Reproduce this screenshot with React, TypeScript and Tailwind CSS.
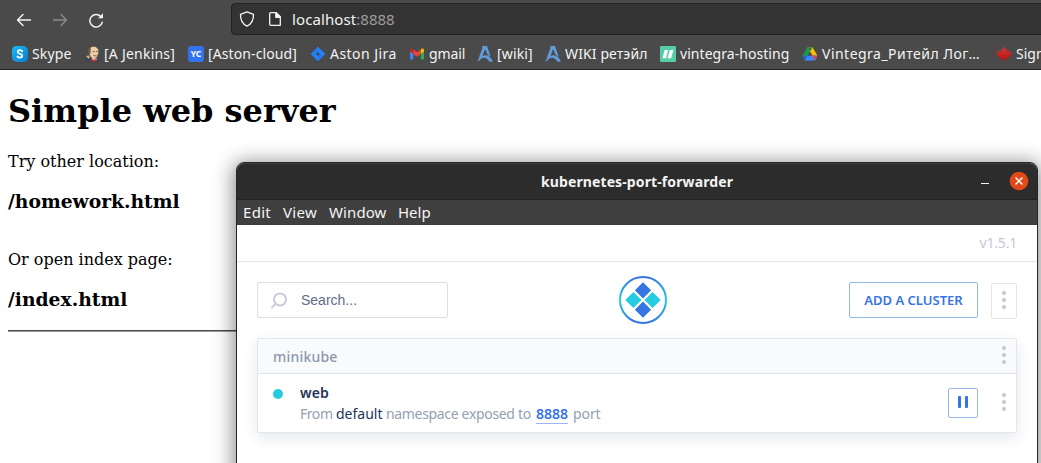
import type { ReactNode } from "react";

function SkypeIcon() {
  return (
    <svg width="16" height="16" viewBox="0 0 16 16">
      <defs>
        <linearGradient id="skype" x1="0" y1="0" x2="1" y2="1">
          <stop offset="0" stopColor="#19baf5" />
          <stop offset="1" stopColor="#0a7bd0" />
        </linearGradient>
      </defs>
      <path d="M4.300 0H11a5 5 0 0 1 5 5v6.700a4.300 4.300 0 0 1-4.300 4.300H5a5 5 0 0 1-5-5V4.300A4.300 4.300 0 0 1 4.300 0Z" fill="url(#skype)" />
      <path d="M10.300 5.300C9.800 4.500 9 4.200 8 4.200c-1.400 0-2.300.7-2.300 1.800C5.700 8.500 10.300 7.300 10.300 9.800c0 1.200-1 1.900-2.400 1.900-1.100 0-2-.4-2.500-1.200" fill="none" stroke="#fff" strokeWidth="1.700" strokeLinecap="round" />
    </svg>
  );
}

function JenkinsIcon() {
  return (
    <svg width="16" height="16" viewBox="0 0 16 16">
      <path d="M.5 15.700c.3-2.800 2-3.800 4.500-4.200h5.500c2.500.5 3.500 2 3.800 4.200Z" fill="#32465a" />
      <path d="M3.800 4C4.200 1.700 6 .4 8.600.4c3.200 0 5 2 5 5 0 3.600-1.800 7-4.700 7.200C6 12.500 3.500 8.800 3.800 4Z" fill="#eccfa9" stroke="#6b4f3b" strokeWidth=".6" />
      <path d="M3.500 6.500C2.800 3.500 4.300 1 6.200.7 5.400 2.200 6 4.500 5.200 8.500Z" fill="#6d5746" />
      <path d="M1.200 10.500l2-1.200 1.900 1.800-1.500 1.700Z" fill="#dcae83" />
      <path d="M7.700 5.600h2M10.900 5.500h1.700M8.300 9.300c1 .7 2.300.7 3.200 0" stroke="#6b4c38" strokeWidth=".9" fill="none" />
      <path d="M6.300 12.200l3.300 3 2.900-2.400" fill="#fff" />
      <path d="M6 13l2.200.8L11.500 13v2.800L9 15l-2.400.8Z" fill="#d3302d" />
    </svg>
  );
}

function CloudIcon() {
  return (
    <span className="flex size-4 items-center justify-center rounded-[3px] bg-[#3373f0] font-['Noto_Sans',sans-serif] text-[8.500px] font-bold leading-none text-white">
      YC
    </span>
  );
}

function JiraIcon() {
  return (
    <svg width="16" height="16" viewBox="0 0 16 16">
      <path d="M8 .8 15.300 8 8 15.200.7 8Z" fill="#2482fb" />
      <path d="M8 .8v4.700L5.700 7.800 4.500 6.300c-.6-.8-.4-1.500.2-2.200Z" fill="#2279ee" />
      <path d="M8 15.200v-4.700l2.300-2.300 1.200 1.500c.6.800.4 1.500-.2 2.200Z" fill="#2279ee" />
      <path d="M8 5.900 10.100 8 8 10.100 5.900 8Z" fill="#434a55" />
    </svg>
  );
}

function GmailIcon() {
  return (
    <svg width="16" height="16" viewBox="0 0 16 16">
      <path d="M1 4v8.500c0 .6.400 1 1 1h2.300V6.600Z" fill="#4285f4" />
      <path d="M15 4v8.500c0 .6-.4 1-1 1h-2.300V6.600Z" fill="#34a853" />
      <path d="M11.700 4v4L15 5.500V4.200c0-1.700-1.700-2.200-2.700-1.300Z" fill="#fbbc04" />
      <path d="M4.300 4v4L1 5.500V4.200c0-1.700 1.700-2.200 2.700-1.300Z" fill="#c5221f" />
      <path d="M4.300 8V3.400L8 6.300l3.700-2.900V8L8 10.800Z" fill="#ea4335" />
    </svg>
  );
}

function WikiIcon() {
  return (
    <svg width="16" height="16" viewBox="0 0 16 16" fill="#639bda">
      <path d="M5.300 0H10L13.600 10.400 10.800 9 8 3 5.800 9.300C5 12 3 14.700 0 16 1.300 14 2 12 2.600 9.500L5.300 2.500Z" />
      <path d="M2.800 13.300C5.500 7.700 12.500 7.500 16 15.800h-3.600C10 11.200 6.200 10.800 2.800 13.300Z" />
    </svg>
  );
}

function HostingIcon() {
  return (
    <svg width="16" height="16" viewBox="0 0 16 16">
      <rect width="16" height="16" rx="1" fill="#57cda7" />
      <path d="M4.700 4h3.300L6 12.300H2.500ZM9.800 4h3.500l-2.200 8.300H7.600Z" fill="#fff" />
    </svg>
  );
}

function DriveIcon() {
  return (
    <svg width="16" height="16" viewBox="0 0 16 16">
      <path d="M5.500 1.200h5L8 5.600 3 14 .6 9.800Z" fill="#159b52" />
      <path d="M5.500 1.200h5l5 8.600h-5Z" fill="#fbbc04" />
      <path d="M5.500 1.200h5L8 5.500Z" fill="#188038" />
      <path d="M.6 9.800h4.900L8 14.400H3Z" fill="#1967d2" />
      <path d="M5.500 9.800h10L13 14.400H3Z" fill="#4285f4" />
      <path d="M10.500 9.800h5L13 14.200Z" fill="#ea4335" />
    </svg>
  );
}

function MapleIcon() {
  return (
    <svg width="16" height="16" viewBox="0 0 16 16">
      <defs>
        <linearGradient id="maple" x1="0" y1="0" x2="0" y2="1">
          <stop offset="0" stopColor="#e23a35" />
          <stop offset="1" stopColor="#a80f10" />
        </linearGradient>
      </defs>
      <path d="M8 .6 9.500 3.400l1.700-.7-.5 3.700 1.800-1.700.5 1.100 2.400-.2-.8 2.400 1 .7-3.700 3.200.4 1.500-3.900-.4L8.300 16h-.6l-.1-3-3.900.4.400-1.500L.4 8.700l1-.7-.8-2.400 2.400.2.500-1.100 1.800 1.700-.5-3.700 1.700.7Z" fill="url(#maple)" />
    </svg>
  );
}

type Bookmark = { label: string; icon: ReactNode; box: string; text: string };

const bookmarks: Bookmark[] = [
  { label: "Skype", icon: <SkypeIcon />, box: "w-[73px]", text: "tracking-[0.15px]" },
  { label: "[A Jenkins]", icon: <JenkinsIcon />, box: "w-[103px]", text: "tracking-[0.23px] -ml-px" },
  { label: "[Aston-cloud]", icon: <CloudIcon />, box: "w-[122px]", text: "tracking-[0.1px]" },
  { label: "Aston Jira", icon: <JiraIcon />, box: "w-[99px]", text: "tracking-[0.45px]" },
  { label: "gmail", icon: <GmailIcon />, box: "w-[68px]", text: "tracking-[-0.1px]" },
  { label: "[wiki]", icon: <WikiIcon />, box: "w-[68px]", text: "tracking-[0.15px]" },
  { label: "WIKI ретэйл", icon: <WikiIcon />, box: "w-[115px]", text: "tracking-[0.12px]" },
  { label: "vintegra-hosting", icon: <HostingIcon />, box: "w-[142px]", text: "tracking-[0.05px]" },
  { label: "Vintegra_Ритейл Лог…", icon: <DriveIcon />, box: "w-[194px]", text: "tracking-[0.48px]" },
  { label: "Sign", icon: <MapleIcon />, box: "w-[73px]", text: "" },
];

function Browser() {
  return (
    <header className="flex h-[70px] flex-col overflow-hidden border-b border-[#242424] bg-[#4a4a4a] font-['Noto_Sans',sans-serif] text-[#f4f4f4]">
      <div className="flex h-[38px] shrink-0 pt-[3px]">
        <div className="flex w-[231px] shrink-0 items-center gap-5 pb-[2px] pl-4">
          <svg width="16" height="16" viewBox="0 0 16 16" fill="none" stroke="#f4f4f4" strokeWidth="1.400" strokeLinecap="round" strokeLinejoin="round">
            <path d="M14.500 8H1.500M7 2.500 1.500 8 7 13.500" />
          </svg>
          <svg width="16" height="16" viewBox="0 0 16 16" fill="none" stroke="#8c8c8c" strokeWidth="1.400" strokeLinecap="round" strokeLinejoin="round">
            <path d="M1.500 8h13M9 2.500l5.500 5.500L9 13.500" />
          </svg>
          <svg width="16" height="16" viewBox="0 0 16 16" fill="none" stroke="#f4f4f4" strokeWidth="1.500" strokeLinecap="round">
            <path d="M14.300 10.200A6.300 6.300 0 1 1 12.800 4.500" />
            <path d="M15 1.300v5h-5Z" fill="#f4f4f4" stroke="none" />
          </svg>
        </div>
        <div className="flex h-8 w-[820px] shrink-0 items-center rounded border border-[#222] bg-[#333] pl-[7px]">
          <svg width="16" height="16" viewBox="0 0 16 16" fill="none" stroke="#f4f4f4" strokeWidth="1.300" strokeLinejoin="round">
            <path d="M8 .9 14.500 3.300c.2 5-1.500 9.500-6.500 11.900C3 12.800 1.300 8.300 1.500 3.300Z" />
          </svg>
          <svg className="ml-3" width="16" height="16" viewBox="0 0 16 16" fill="none" stroke="#f4f4f4" strokeWidth="1.300" strokeLinejoin="round">
            <path d="M3.700 1.700h5.600l4 4v8.600h-9.600a1 1 0 0 1-1-1V2.700a1 1 0 0 1 1-1Z" />
            <path d="M8.800 1.700v4.600h4.500Z" fill="#f4f4f4" />
          </svg>
          <span className="ml-[9px] text-[15px] leading-5 tracking-[0.1px]">localhost</span>
          <span className="text-[15px] leading-5 text-[#9d9d9d]">:8888</span>
        </div>
      </div>
      <nav className="flex h-8 w-[1120px] shrink-0 items-center pl-3">
        {bookmarks.map((b) => (
          <div key={b.label} className={`flex shrink-0 items-center gap-1 ${b.box}`}>
            <span className="shrink-0">{b.icon}</span>
            <span className={`whitespace-nowrap text-[14px] leading-5 ${b.text}`}>{b.label}</span>
          </div>
        ))}
      </nav>
    </header>
  );
}

function WebPage() {
  return (
    <main className="px-2 pt-[23px] font-['DejaVu_Serif',serif] text-base leading-[19px] text-black">
      <h1 className="text-[32px] font-bold leading-[37px]">Simple web server</h1>
      <p className="mt-[22px]">Try other location:</p>
      <h3 className="mt-[19px] text-[18.720px] font-bold leading-[22px]">/homework.html</h3>
      <p className="mt-[38px]">Or open index page:</p>
      <h3 className="mt-[19px] text-[18.720px] font-bold leading-[22px]">/index.html</h3>
      <hr className="mt-5 border-0 border-b border-t border-b-[#9a9a9a] border-t-[#4a4a4a]" />
    </main>
  );
}

function Dots() {
  return (
    <span className="flex w-1 flex-col gap-[3px]">
      <i className="size-1 rounded-full bg-[#c4c8d6]" />
      <i className="size-1 rounded-full bg-[#c4c8d6]" />
      <i className="size-1 rounded-full bg-[#c4c8d6]" />
    </span>
  );
}

function Logo() {
  return (
    <svg width="48" height="48" viewBox="0 0 48 48">
      <defs>
        <linearGradient id="ring" x1="0" y1="0" x2="0" y2="1">
          <stop offset="0" stopColor="#3673e3" />
          <stop offset=".5" stopColor="#25cbdf" />
          <stop offset="1" stopColor="#3673e3" />
        </linearGradient>
      </defs>
      <circle cx="24" cy="24" r="23" fill="none" stroke="url(#ring)" strokeWidth="2" />
      <path d="M24 6.200 32.100 14.300 24 22.400 15.900 14.300ZM24 25.600l8.100 8.100L24 41.800l-8.100-8.100Z" fill="#3673e3" />
      <path d="M14.400 15.900 22.500 24l-8.100 8.100L6.300 24ZM33.600 15.900 41.700 24l-8.100 8.100L25.500 24Z" fill="#25cbdf" />
    </svg>
  );
}

function PortForwarder() {
  return (
    <section className="absolute left-[236px] top-[162px] flex h-[320px] w-[802px] flex-col rounded-t-lg border border-[#262626] bg-white font-['Noto_Sans',sans-serif] shadow-[0_3px_20px_3px_rgba(0,0,0,0.44)]">
      <div className="flex h-[37px] shrink-0 items-center rounded-t-[7px] border-b border-t border-b-[#222] border-t-[#3d3d3d] bg-[#2c2c2c]">
        <div className="w-[62px]" />
        <h2 className="flex-1 text-center text-[14px] font-bold leading-5 tracking-[0.11px] text-[#f4f4f4]">kubernetes-port-forwarder</h2>
        <div className="flex w-[62px] items-center gap-5 pl-[6px]">
          <span className="mt-1 h-px w-2 bg-[#f4f4f4]" />
          <svg className="-mt-px" width="20" height="20" viewBox="0 0 20 20">
            <circle cx="10" cy="10" r="9.300" fill="#e14a18" />
            <path d="M6.500 6.500 13.500 13.500M13.500 6.500 6.500 13.500" stroke="#fff" strokeWidth="1.400" />
          </svg>
        </div>
      </div>
      <nav className="flex h-[25px] shrink-0 items-center bg-[#3f3f3f] pb-[2px] pl-[6px] text-[15px] leading-5 text-[#f4f4f4]">
        <span className="w-10 tracking-[0.3px]">Edit</span>
        <span className="w-[46px] tracking-[0.3px]">View</span>
        <span className="w-[69px] tracking-[0.1px]">Window</span>
        <span>Help</span>
      </nav>
      <div className="flex h-[37px] shrink-0 items-center justify-end border-b border-[#e6e7e9] pb-px pr-5 text-[14px] text-[#c4c8d6]">
        <span className="tracking-[-0.2px]">v1.5.1</span>
      </div>
      <div className="px-5">
        <div className="flex h-[76px] items-center justify-between">
          <div className="flex h-9 w-[191px] items-center rounded-[2px] border border-[#dcdfe8] pl-3">
            <svg width="17" height="17" viewBox="0 0 17 17" fill="none" stroke="#c8ccda" strokeWidth="2">
              <circle cx="10" cy="7.500" r="6" />
              <path d="M5.700 11.800 1.400 16.100" />
            </svg>
            <span className="ml-[14px] font-['Liberation_Sans',sans-serif] text-[14px] leading-5 text-[#5f6d8c]">Search...</span>
          </div>
          <div className="pr-3">
            <Logo />
          </div>
          <div className="flex items-center gap-[13px]">
            <button className="h-9 w-[129px] rounded-[2px] border border-[#98b5ee] text-[13px] font-semibold leading-5 text-[#3673e3]">ADD A CLUSTER</button>
            <button className="mt-[2px] flex h-9 w-[26px] items-center justify-center rounded-[2px] border border-[#e4e6ee]">
              <span className="-mt-[2px]"><Dots /></span>
            </button>
          </div>
        </div>
        <div className="h-[95px] rounded-[2px] border border-[#e3e6ed] shadow-[0_5px_14px_rgba(40,60,110,0.12)]">
          <div className="flex h-[35px] items-center justify-between border-b border-[#e0e3ea] bg-[#f9fafc] pl-[15px] pr-[10px]">
            <span className="mt-px text-[14px] font-medium leading-5 tracking-[0.2px] text-[#8c97ac]">minikube</span>
            <span className="-mt-[2px]"><Dots /></span>
          </div>
          <div className="flex h-[58px] bg-white pl-[15px] pr-[10px]">
            <i className="mt-[15px] size-[10px] rounded-full bg-[#25cbdf]" />
            <div className="ml-[17px] flex-1 pt-[9px]">
              <div className="text-[14px] font-semibold leading-5 tracking-[0.1px] text-[#223458]">web</div>
              <div className="flex h-[21px] text-[14px] leading-[21px] text-[#959fb2]">
                <span className="w-[36px] tracking-[-0.45px]">From</span>
                <span className="w-[50px] text-[#223458]">default</span>
                <span className="w-[150px] whitespace-nowrap tracking-[-0.33px]">namespace exposed to</span>
                <span className="w-8 border-b border-[#98b5ee] font-semibold text-[#3673e3]">8888</span>
                <span className="ml-[5px] tracking-[-0.1px]">port</span>
              </div>
            </div>
            <button className="mr-[24px] mt-[14px] flex size-[30px] items-center justify-center gap-1 rounded-[2px] border border-[#98b5ee] pb-[2px]">
              <i className="h-3 w-[3px] rounded-[1px] bg-[#3673e3]" />
              <i className="h-3 w-[3px] rounded-[1px] bg-[#3673e3]" />
            </button>
            <span className="mt-[19px]"><Dots /></span>
          </div>
        </div>
      </div>
    </section>
  );
}

export default function App() {
  return (
    <div className="relative h-[463px] w-[1041px] overflow-hidden bg-white">
      <Browser />
      <WebPage />
      <PortForwarder />
    </div>
  );
}
